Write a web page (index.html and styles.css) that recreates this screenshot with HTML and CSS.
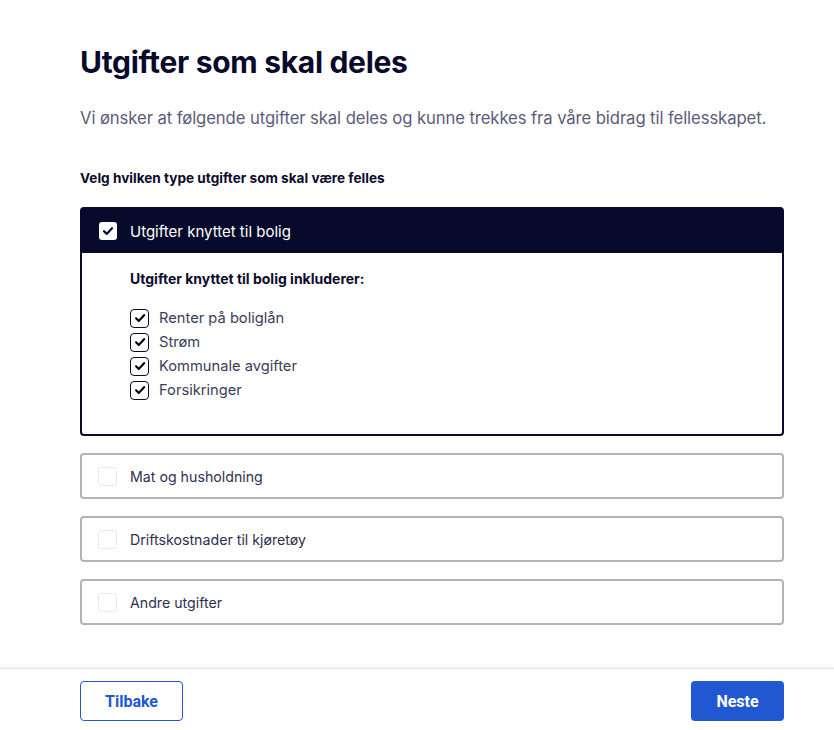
FILE: index.html
```html
<!DOCTYPE html>
<html lang="no">
<head>
<meta charset="utf-8">
<title>Utgifter som skal deles</title>
<link rel="stylesheet" href="styles.css">
</head>
<body>
<main class="page">
  <h1 class="title">Utgifter som skal deles</h1>
  <p class="lead">Vi ønsker at følgende utgifter skal deles og kunne trekkes fra våre bidrag til fellesskapet.</p>
  <h2 class="label">Velg hvilken type utgifter som skal være felles</h2>

  <div class="options">
    <section class="card card--open">
      <div class="card-head">
        <span class="box box--head"><svg viewBox="0 0 18 18" width="18" height="18"><path d="M5 9.2l2.7 2.7L13 6.2" fill="none" stroke="#070a2b" stroke-width="2.2" stroke-linecap="round" stroke-linejoin="round"/></svg></span>
        <span class="card-title">Utgifter knyttet til bolig</span>
      </div>
      <div class="card-body">
        <h3 class="sub">Utgifter knyttet til bolig inkluderer:</h3>
        <ul class="checks">
          <li><span class="box box--small"><svg viewBox="0 0 18 18" width="18" height="18"><path d="M4.6 9.3l3 3L13.6 5.8" fill="none" stroke="#000" stroke-width="2.4" stroke-linecap="round" stroke-linejoin="round"/></svg></span>Renter på boliglån</li>
          <li><span class="box box--small"><svg viewBox="0 0 18 18" width="18" height="18"><path d="M4.6 9.3l3 3L13.6 5.8" fill="none" stroke="#000" stroke-width="2.4" stroke-linecap="round" stroke-linejoin="round"/></svg></span>Strøm</li>
          <li><span class="box box--small"><svg viewBox="0 0 18 18" width="18" height="18"><path d="M4.6 9.3l3 3L13.6 5.8" fill="none" stroke="#000" stroke-width="2.4" stroke-linecap="round" stroke-linejoin="round"/></svg></span>Kommunale avgifter</li>
          <li><span class="box box--small"><svg viewBox="0 0 18 18" width="18" height="18"><path d="M4.6 9.3l3 3L13.6 5.8" fill="none" stroke="#000" stroke-width="2.4" stroke-linecap="round" stroke-linejoin="round"/></svg></span>Forsikringer</li>
        </ul>
      </div>
    </section>

    <section class="card">
      <div class="card-row"><span class="box box--empty"></span><span class="card-text">Mat og husholdning</span></div>
    </section>
    <section class="card">
      <div class="card-row"><span class="box box--empty"></span><span class="card-text">Driftskostnader til kjøretøy</span></div>
    </section>
    <section class="card">
      <div class="card-row"><span class="box box--empty"></span><span class="card-text">Andre utgifter</span></div>
    </section>
  </div>
</main>
<footer class="footer">
  <button class="btn btn--ghost" type="button">Tilbake</button>
  <button class="btn btn--primary" type="button">Neste</button>
</footer>
</body>
</html>
```

FILE: styles.css
```css
* { box-sizing: border-box; }
html, body { margin: 0; padding: 0; background: #fff; }
body {
  font-family: "Inter", "Lato", sans-serif;
  color: #0b0c2c;
  width: 834px;
  height: 730px;
  overflow: hidden;
  display: flex;
  flex-direction: column;
}
.page {
  padding: 0 50px 0 80px;
  flex: 1;
}
.title {
  margin: 42px 0 0;
  font-size: 30px;
  line-height: 40px;
  font-weight: 700;
  color: #080a2c;
  letter-spacing: -0.3px;
}
.lead {
  margin: 24px 0 0;
  font-size: 16.7px;
  line-height: 24px;
  color: #5b5c78;
  letter-spacing: -0.1px;
}
.label {
  margin: 38px 0 0;
  font-size: 13.6px;
  line-height: 20px;
  font-weight: 700;
  color: #0b0c2c;
}
.options {
  margin-top: 19px;
  width: 704px;
  display: flex;
  flex-direction: column;
  gap: 17px;
}
.card {
  border: 2px solid #b3b3b3;
  border-radius: 4px;
  background: #fff;
}
.card--open {
  border-color: #070a2b;
}
.card-head {
  background: #070a2b;
  height: 44px;
  display: flex;
  align-items: center;
  padding-left: 17px;
  gap: 13px;
}
.card-title {
  color: #fff;
  font-size: 15px;
}
.box {
  width: 18px;
  height: 18px;
  flex: none;
  border-radius: 3px;
  display: inline-flex;
}
.box--head { background: #fff; }
.box--small {
  border: 1.5px solid #070a2b;
  border-radius: 4px;
  width: 19px;
  height: 19px;
  margin-right: 10px;
  align-items: center;
  justify-content: center;
}
.box--small svg { width: 16px; height: 16px; }
.box--empty {
  border: 1px solid #e9e9ec;
  width: 19px;
  height: 19px;
}
.card-body {
  padding: 17px 48px 32px;
}
.sub {
  margin: 0;
  font-size: 14px;
  line-height: 18px;
  font-weight: 700;
  color: #0b0c2c;
}
.checks {
  list-style: none;
  margin: 18px 0 0;
  padding: 0;
}
.checks li {
  display: flex;
  align-items: center;
  height: 24px;
  font-size: 14.7px;
  color: #3c3d5a;
}
.card-row {
  height: 42px;
  display: flex;
  align-items: center;
  padding-left: 16px;
  gap: 13px;
}
.card-text {
  font-size: 14.2px;
  color: #2f3050;
}
.footer {
  height: 62px;
  border-top: 1px solid #e4e4e4;
  box-shadow: 0 -3px 5px rgba(0,0,0,0.04);
  display: flex;
  justify-content: space-between;
  align-items: flex-start;
  padding: 12px 50px 0 80px;
}
.btn {
  height: 40px;
  border-radius: 4px;
  font-family: "Roboto", sans-serif;
  font-weight: 700;
  font-size: 16px;
  cursor: pointer;
}
.btn--ghost {
  width: 103px;
  background: #fff;
  border: 1px solid #2257d1;
  color: #2257d1;
}
.btn--primary {
  width: 93px;
  background: #2157d1;
  border: none;
  color: #fff;
}
```
